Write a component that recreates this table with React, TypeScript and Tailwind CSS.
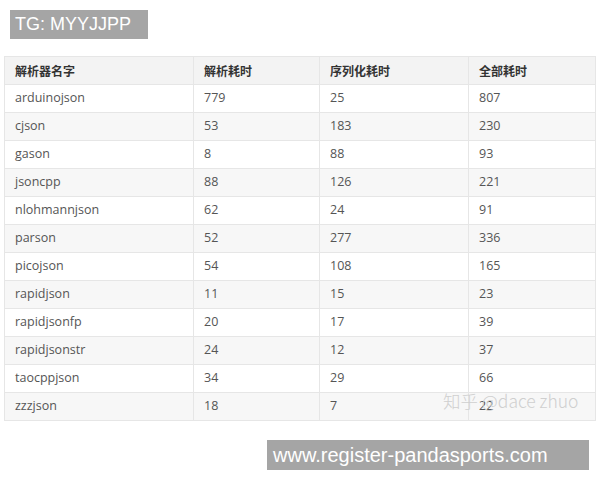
const rows: [string, string, string, string][] = [
  ['arduinojson', '779', '25', '807'],
  ['cjson', '53', '183', '230'],
  ['gason', '8', '88', '93'],
  ['jsoncpp', '88', '126', '221'],
  ['nlohmannjson', '62', '24', '91'],
  ['parson', '52', '277', '336'],
  ['picojson', '54', '108', '165'],
  ['rapidjson', '11', '15', '23'],
  ['rapidjsonfp', '20', '17', '39'],
  ['rapidjsonstr', '24', '12', '37'],
  ['taocppjson', '34', '29', '66'],
  ['zzzjson', '18', '7', '22'],
]

const headers = ['解析器名字', '解析耗时', '序列化耗时', '全部耗时']

export default function App() {
  return (
    <div className="w-[600px] h-[480px] bg-white relative overflow-hidden font-['Open_Sans','Noto_Sans_CJK_SC',sans-serif]">
      <div className="pt-[10px] pl-[10px]">
        <div className="w-[138px] h-[29px] bg-[#a5a5a5] text-white text-[18px] leading-[29px] pl-[5px] font-['Liberation_Sans',sans-serif]">
          TG: MYYJJPP
        </div>
      </div>

      <div className="pl-[4px] pt-[17px] relative">
        <table className="w-[591px] border-collapse table-fixed text-[12.5px] text-[#555]">
          <colgroup>
            <col className="w-[189px]" />
            <col className="w-[126px]" />
            <col className="w-[149px]" />
            <col className="w-[127px]" />
          </colgroup>
          <thead>
            <tr className="h-[28px] bg-[#f3f3f3]">
              {headers.map((h) => (
                <th
                  key={h}
                  className="border border-[#e6e6e6] text-left font-bold text-[#333] pl-[10px] font-['Noto_Sans_CJK_SC',sans-serif] text-[12px]"
                >
                  {h}
                </th>
              ))}
            </tr>
          </thead>
          <tbody>
            {rows.map((r, i) => (
              <tr key={r[0]} className={i % 2 === 0 ? 'h-[28px] bg-white' : 'h-[28px] bg-[#f7f7f7]'}>
                {r.map((c, j) => (
                  <td key={j} className="border border-[#e6e6e6] pl-[10px]">
                    {c}
                  </td>
                ))}
              </tr>
            ))}
          </tbody>
        </table>
        <div className="absolute left-[443px] top-[349px] text-[17.5px] text-[#cfcfcf] font-['Noto_Sans_CJK_SC',sans-serif] font-light">
          知乎 @dace zhuo
        </div>
      </div>

      <div className="pl-[267px] pt-[19px]">
        <div className="w-[322px] h-[30px] bg-[#a5a5a5] text-white text-[20px] leading-[30px] pl-[6px] font-['Liberation_Sans',sans-serif]">
          www.register-pandasports.com
        </div>
      </div>
    </div>
  )
}
